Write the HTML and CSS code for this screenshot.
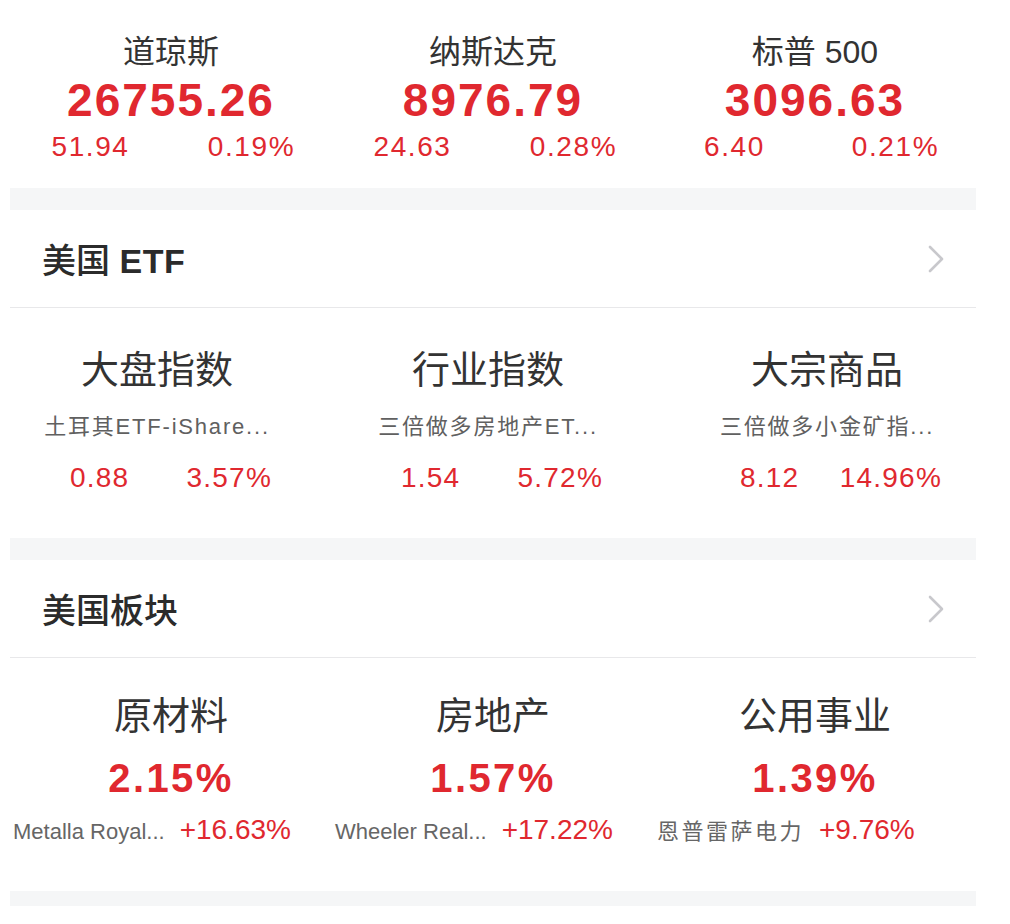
FILE: index.html
```html
<!DOCTYPE html>
<html lang="zh-CN">
<head>
<meta charset="utf-8">
<title>美股行情</title>
<link rel="stylesheet" href="styles.css">
</head>
<body>
<div class="page">
  <section class="indices">
    <div class="index">
      <div class="index-name">道琼斯</div>
      <div class="index-value">26755.26</div>
      <div class="index-change"><span>51.94</span><span>0.19%</span></div>
    </div>
    <div class="index">
      <div class="index-name">纳斯达克</div>
      <div class="index-value">8976.79</div>
      <div class="index-change"><span>24.63</span><span>0.28%</span></div>
    </div>
    <div class="index">
      <div class="index-name">标普 500</div>
      <div class="index-value">3096.63</div>
      <div class="index-change"><span>6.40</span><span>0.21%</span></div>
    </div>
  </section>

  <div class="band"></div>

  <section class="panel">
    <div class="panel-head">
      <h2 class="panel-title">美国 <span class="latin">ETF</span></h2>
      <svg class="chevron" width="18" height="30" viewBox="0 0 18 30"><polyline points="3,3 15,15 3,27" fill="none" stroke="#c8c8cc" stroke-width="2.6" stroke-linecap="round" stroke-linejoin="round"/></svg>
    </div>
    <div class="etf-grid">
      <div class="etf">
        <div class="etf-name">大盘指数</div>
        <div class="etf-sub">土耳其ETF-iShare...</div>
        <div class="etf-nums"><span>0.88</span><span>3.57%</span></div>
      </div>
      <div class="etf">
        <div class="etf-name">行业指数</div>
        <div class="etf-sub">三倍做多房地产ET...</div>
        <div class="etf-nums"><span>1.54</span><span>5.72%</span></div>
      </div>
      <div class="etf">
        <div class="etf-name">大宗商品</div>
        <div class="etf-sub">三倍做多小金矿指...</div>
        <div class="etf-nums"><span>8.12</span><span>14.96%</span></div>
      </div>
    </div>
  </section>

  <div class="band"></div>

  <section class="panel">
    <div class="panel-head">
      <h2 class="panel-title">美国板块</h2>
      <svg class="chevron" width="18" height="30" viewBox="0 0 18 30"><polyline points="3,3 15,15 3,27" fill="none" stroke="#c8c8cc" stroke-width="2.6" stroke-linecap="round" stroke-linejoin="round"/></svg>
    </div>
    <div class="sector-grid">
      <div class="sector">
        <div class="sector-name">原材料</div>
        <div class="sector-pct">2.15%</div>
        <div class="sector-lead"><span class="lead-name">Metalla Royal...</span><span class="lead-pct">+16.63%</span></div>
      </div>
      <div class="sector">
        <div class="sector-name">房地产</div>
        <div class="sector-pct">1.57%</div>
        <div class="sector-lead"><span class="lead-name">Wheeler Real...</span><span class="lead-pct">+17.22%</span></div>
      </div>
      <div class="sector">
        <div class="sector-name">公用事业</div>
        <div class="sector-pct">1.39%</div>
        <div class="sector-lead"><span class="lead-name lead-cjk">恩普雷萨电力</span><span class="lead-pct">+9.76%</span></div>
      </div>
    </div>
  </section>

  <div class="band band-last"></div>
</div>
</body>
</html>
```

FILE: styles.css
```css
* { box-sizing: border-box; }

html, body {
  margin: 0;
  padding: 0;
  background: #ffffff;
}

body {
  font-family: "Liberation Sans", "Noto Sans CJK SC", sans-serif;
  color: #333333;
}

.page {
  margin-left: 10px;
  width: 966px;
}

/* top indices */
.indices {
  display: grid;
  grid-template-columns: repeat(3, 1fr);
  padding: 32px 0 24px;
}

.index {
  display: flex;
  flex-direction: column;
  align-items: center;
}

.index-name {
  font-size: 32px;
  line-height: 40px;
  color: #333333;
}

.index-value {
  margin-top: 2px;
  font-size: 46px;
  line-height: 52px;
  font-weight: 700;
  letter-spacing: 2px;
  color: #e0282f;
}

.index-change {
  margin-top: 4px;
  width: 100%;
  display: grid;
  grid-template-columns: 1fr 1fr;
  font-size: 28px;
  line-height: 34px;
  letter-spacing: 1.6px;
  color: #e0282f;
  text-align: center;
}

.band {
  height: 22px;
  background: #f5f6f7;
}

.band-last {
  height: 15px;
}

/* panels */
.panel-head {
  height: 98px;
  display: flex;
  align-items: center;
  justify-content: space-between;
  padding: 0 31px 0 32px;
  border-bottom: 1px solid #e8e8ea;
}

.panel-title {
  margin: 0;
  font-size: 34px;
  font-weight: 500;
  color: #2b2b2b;
}

.latin {
  font-weight: 700;
  letter-spacing: 0.5px;
}

.chevron {
  display: block;
}

/* ETF */
.etf-grid {
  display: grid;
  grid-template-columns: 331px 339px 1fr;
  padding: 40px 32px 42px;
}

.etf {
  width: 230px;
  display: flex;
  flex-direction: column;
  align-items: center;
}

.etf-name {
  font-size: 38px;
  line-height: 44px;
  color: #333333;
}

.etf-sub {
  margin-top: 20px;
  font-size: 22px;
  line-height: 30px;
  letter-spacing: 1.8px;
  color: #606060;
  white-space: nowrap;
}

.etf-nums {
  margin-top: 18px;
  width: 100%;
  padding-left: 28px;
  display: flex;
  justify-content: space-between;
  font-size: 28px;
  line-height: 36px;
  letter-spacing: 1.2px;
  color: #e0282f;
}

/* sectors */
.sector-grid {
  display: grid;
  grid-template-columns: repeat(3, 1fr);
  padding: 36px 0 42px;
}

.sector {
  display: flex;
  flex-direction: column;
  align-items: center;
}

.sector-name {
  font-size: 38px;
  line-height: 44px;
  color: #333333;
}

.sector-pct {
  margin-top: 16px;
  font-size: 40px;
  line-height: 48px;
  font-weight: 700;
  letter-spacing: 2.4px;
  color: #e0282f;
}

.sector-lead {
  margin-top: 11px;
  align-self: flex-start;
  padding-left: 3px;
  display: flex;
  align-items: baseline;
  gap: 15px;
  line-height: 34px;
  white-space: nowrap;
}

.lead-name {
  font-size: 22px;
  color: #666666;
}

.lead-cjk {
  letter-spacing: 2.5px;
}

.lead-pct {
  font-size: 28px;
  color: #e0282f;
}
```
